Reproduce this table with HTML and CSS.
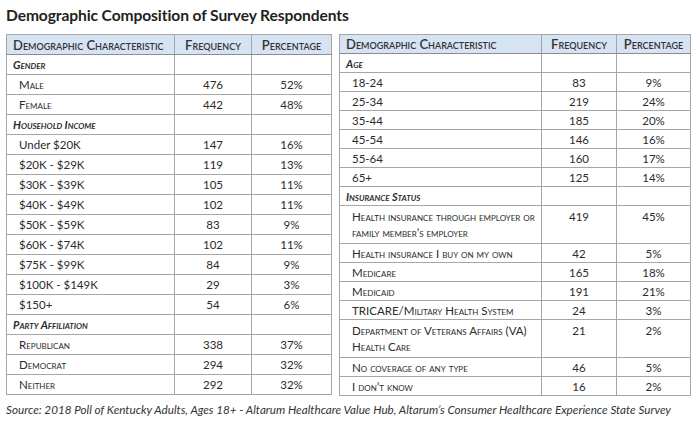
FILE: index.html
```html
<!DOCTYPE html>
<html lang="en">
<head>
  <meta charset="UTF-8">
  <title>Demographic Composition of Survey Respondents</title>
  <link rel="stylesheet" href="styles.css">
</head>
<body>

<div class="page">
  <h1 class="title">Demographic Composition of Survey Respondents</h1>

  <div class="tables">
    <!-- Left table -->
    <table class="demo left">
      <colgroup>
        <col class="c-label">
        <col class="c-freq">
        <col class="c-pct">
      </colgroup>
      <thead>
        <tr>
          <th class="label">Demographic Characteristic</th>
          <th>Frequency</th>
          <th>Percentage</th>
        </tr>
      </thead>
      <tbody>
        <tr class="cat"><td>Gender</td><td></td><td></td></tr>
        <tr class="sc"><td>Male</td><td>476</td><td>52%</td></tr>
        <tr class="sc"><td>Female</td><td>442</td><td>48%</td></tr>
        <tr class="cat"><td>Household Income</td><td></td><td></td></tr>
        <tr><td>Under $20K</td><td>147</td><td>16%</td></tr>
        <tr><td>$20K - $29K</td><td>119</td><td>13%</td></tr>
        <tr><td>$30K - $39K</td><td>105</td><td>11%</td></tr>
        <tr><td>$40K - $49K</td><td>102</td><td>11%</td></tr>
        <tr><td>$50K - $59K</td><td>83</td><td>9%</td></tr>
        <tr><td>$60K - $74K</td><td>102</td><td>11%</td></tr>
        <tr><td>$75K - $99K</td><td>84</td><td>9%</td></tr>
        <tr><td>$100K - $149K</td><td>29</td><td>3%</td></tr>
        <tr><td>$150+</td><td>54</td><td>6%</td></tr>
        <tr class="cat"><td>Party Affiliation</td><td></td><td></td></tr>
        <tr class="sc"><td>Republican</td><td>338</td><td>37%</td></tr>
        <tr class="sc"><td>Democrat</td><td>294</td><td>32%</td></tr>
        <tr class="sc"><td>Neither</td><td>292</td><td>32%</td></tr>
      </tbody>
    </table>

    <!-- Right table -->
    <table class="demo right">
      <colgroup>
        <col class="c-label">
        <col class="c-freq">
        <col class="c-pct">
      </colgroup>
      <thead>
        <tr>
          <th class="label">Demographic Characteristic</th>
          <th>Frequency</th>
          <th>Percentage</th>
        </tr>
      </thead>
      <tbody>
        <tr class="cat"><td>Age</td><td></td><td></td></tr>
        <tr><td>18-24</td><td>83</td><td>9%</td></tr>
        <tr><td>25-34</td><td>219</td><td>24%</td></tr>
        <tr><td>35-44</td><td>185</td><td>20%</td></tr>
        <tr><td>45-54</td><td>146</td><td>16%</td></tr>
        <tr><td>55-64</td><td>160</td><td>17%</td></tr>
        <tr><td>65+</td><td>125</td><td>14%</td></tr>
        <tr class="cat"><td>Insurance Status</td><td></td><td></td></tr>
        <tr class="sc two"><td>Health insurance through employer or family member’s employer</td><td>419</td><td>45%</td></tr>
        <tr class="sc"><td>Health insurance I buy on my own</td><td>42</td><td>5%</td></tr>
        <tr class="sc"><td>Medicare</td><td>165</td><td>18%</td></tr>
        <tr class="sc"><td>Medicaid</td><td>191</td><td>21%</td></tr>
        <tr class="sc"><td>TRICARE/Military Health System</td><td>24</td><td>3%</td></tr>
        <tr class="sc two"><td>Department of Veterans Affairs (VA) Health Care</td><td>21</td><td>2%</td></tr>
        <tr class="sc"><td>No coverage of any type</td><td>46</td><td>5%</td></tr>
        <tr class="sc"><td>I don’t know</td><td>16</td><td>2%</td></tr>
      </tbody>
    </table>
  </div>

  <p class="source">Source: 2018 Poll of Kentucky Adults, Ages 18+ - Altarum Healthcare Value Hub, Altarum’s Consumer Healthcare Experience State Survey</p>
</div>

</body>
</html>
```

FILE: styles.css
```css
/* Reset some default margins */
* {
  margin: 0;
  padding: 0;
  box-sizing: border-box;
}
body {
  font-family: Lato, "Open Sans", Arial, sans-serif;
  background-color: #ffffff;
  color: #2b2b2b;
}
.page {
  padding: 6px 6px 0 6px;
}
.title {
  font-size: 15.6px;
  font-weight: bold;
  color: #231f20;
  line-height: 18px;
  height: 28px;
  letter-spacing: -0.1px;
}
.tables {
  display: flex;
  align-items: flex-start;
  gap: 7px;
}
table.demo {
  border-collapse: collapse;
  table-layout: fixed;
  border: 1px solid #8c8c8c;
  font-size: 11.5px;
}
table.left {
  width: 325px;
}
table.right {
  width: 351px;
}
.left .c-label { width: 168px; }
.left .c-freq { width: 77px; }
.left .c-pct { width: 80px; }
.right .c-label { width: 202px; }
.right .c-freq { width: 75px; }
.right .c-pct { width: 74px; }

th, td {
  border: 1px solid #a6a6a6;
  text-align: center;
  padding: 0 4px;
  white-space: nowrap;
}
th {
  background-color: #d6e3f3;
  font-variant: small-caps;
  font-weight: 600;
  font-size: 13px;
  color: #333;
  border-bottom: 1px solid #8c8c8c;
}
th.label {
  text-align: left;
  padding-left: 6px;
}
td:first-child {
  text-align: left;
  padding-left: 12px;
}
.left th, .left td {
  height: 20px;
}
.right th, .right td {
  height: 19px;
}
tr.cat td:first-child {
  font-weight: bold;
  font-style: italic;
  font-variant: small-caps;
  padding-left: 6px;
  font-size: 11px;
}
tr.sc td:first-child {
  font-variant: small-caps;
}
tr.two td {
  vertical-align: top;
  padding-top: 3px;
  line-height: 16px;
  height: 38px;
}
tr.two td:first-child {
  white-space: normal;
}
.source {
  font-size: 11.7px;
  font-style: italic;
  color: #333;
  margin-top: 6px;
  white-space: nowrap;
}
```
